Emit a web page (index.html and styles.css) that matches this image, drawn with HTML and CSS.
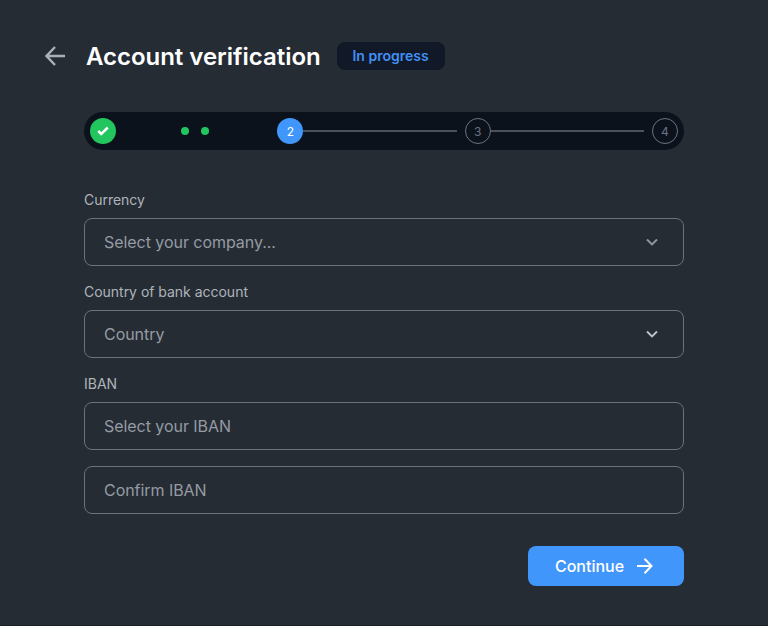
FILE: index.html
```html
<!DOCTYPE html>
<html lang="en">
<head>
<meta charset="utf-8">
<title>Account verification</title>
<link rel="stylesheet" href="styles.css">
</head>
<body>
<main class="page">
  <header class="header">
    <svg class="back" viewBox="0 0 24 24"><path d="M22 12H4M12 3L3.500 12l8.500 9"/></svg>
    <h1 class="title">Account verification</h1>
    <span class="badge">In progress</span>
  </header>
  <div class="content">
    <div class="stepper">
      <span class="step done"><svg class="check" viewBox="0 0 12 12"><path d="M1.200 6l3 3L10.800 2.500"/></svg></span>
      <span class="dots"><i class="dot"></i><i class="dot"></i></span>
      <span class="step current">2</span>
      <span class="line"></span>
      <span class="step">3</span>
      <span class="line"></span>
      <span class="step">4</span>
    </div>
    <form class="form">
      <label class="label">Currency</label>
      <div class="field"><span>Select your company...</span><svg class="chevron" viewBox="0 0 12 12"><path d="M1 3.500l5 5 5-5"/></svg></div>
      <label class="label">Country of bank account</label>
      <div class="field"><span>Country</span><svg class="chevron bright" viewBox="0 0 12 12"><path d="M1 3.500l5 5 5-5"/></svg></div>
      <label class="label">IBAN</label>
      <div class="field"><span>Select your IBAN</span></div>
      <div class="field"><span>Confirm IBAN</span></div>
      <button class="continue" type="button">Continue<svg class="arrow" viewBox="0 0 18 18"><path d="M1 9h14.500M8.500 1.700L15.500 9l-7 7.300"/></svg></button>
    </form>
  </div>
</main>
</body>
</html>
```
FILE: styles.css
```css
* { box-sizing: border-box; }
body { margin: 0; background: #252c33; font-family: Inter, "Liberation Sans", sans-serif; }
svg { fill: none; stroke: currentColor; stroke-linecap: butt; stroke-linejoin: miter; flex: none; }
.page { height: 626px; padding: 40px 84px 0 43px; border-bottom: 1px solid #1d2229; }
.header { display: flex; align-items: center; height: 32px; }
.back { width: 24px; height: 24px; color: #aab0b8; stroke-width: 2.5; }
.title { margin: 0 0 0 19px; padding-top: 2px; width: 251px; font-size: 24px; line-height: 30px; font-weight: 600; letter-spacing: -0.03px; color: #fff; white-space: nowrap; }
.badge { width: 108px; height: 28px; border-radius: 8px; background: #111827; color: #4090f5; font-size: 14px; line-height: 28px; font-weight: 600; text-align: center; text-indent: -1px; }
.content { margin: 40px 0 0 41px; }
.stepper { display: flex; align-items: center; height: 38px; padding: 0 6px; border-radius: 19px; background: #0c121c; }
.step { display: flex; flex: none; align-items: center; justify-content: center; width: 26px; height: 26px; border: 1px solid #6b7280; border-radius: 50%; color: #6b7280; font-size: 12px; }
.done { border: 0; background: #22c55e; color: #fff; }
.current { border: 0; background: #4096fa; color: #fff; }
.check { width: 12px; height: 12px; stroke-width: 2.5; }
.dots { display: flex; flex: 1 1 0; justify-content: center; gap: 12px; padding-left: 5px; margin-right: 8px; }
.dot { width: 8px; height: 8px; border-radius: 50%; background: #22c55e; }
.line { flex: 1 1 0; height: 2px; margin-right: 8px; background: #4b525e; }
.dots, .line { min-width: 0; flex-basis: calc((100% - 128px) / 3); flex-grow: 0; }
.form { display: flex; flex-direction: column; margin-top: 40px; }
.label { height: 28px; color: #afb4bb; font-size: 14px; line-height: 20px; letter-spacing: -0.02px; }
.field { display: flex; align-items: center; justify-content: space-between; height: 48px; margin-bottom: 16px; padding: 0 25px 0 19px; border: 1px solid #6b727b; border-radius: 8px; color: #959ba4; font-size: 16px; letter-spacing: -0.05px; }
.chevron { width: 12px; height: 12px; stroke-width: 1.9; color: #9298a1; }
.bright { color: #bfc4cb; }
.continue { display: flex; align-items: center; justify-content: center; align-self: flex-end; gap: 12px; width: 156px; height: 40px; margin-top: 16px; padding: 0 3px 0 0; border: 0; border-radius: 8px; background: #4096fa; color: #fff; font: 500 16px Inter, sans-serif; }
.arrow { width: 18px; height: 18px; stroke-width: 2; }
```
